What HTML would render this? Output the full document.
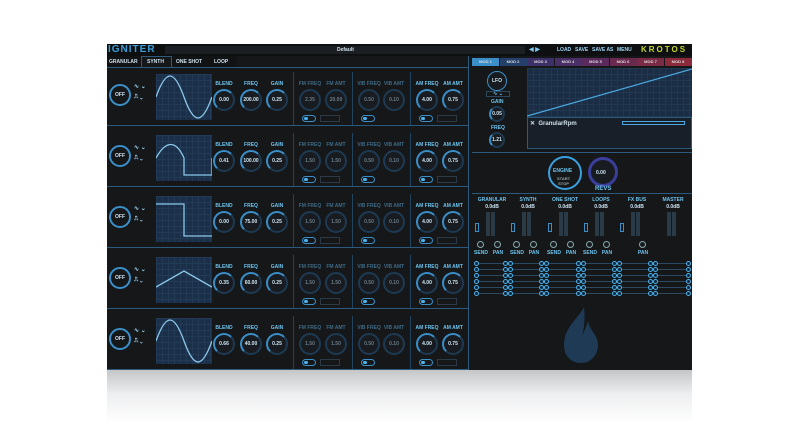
<!DOCTYPE html>
<html><head><meta charset="utf-8">
<style>
*{margin:0;padding:0;box-sizing:border-box}
body{width:800px;height:424px;background:#fff;position:relative;overflow:hidden;font-family:"Liberation Sans",sans-serif;font-weight:bold}
.a{position:absolute}
#win{left:107px;top:44px;width:585px;height:326px;background:#151719;}
#refl{left:107px;top:370px;width:585px;height:54px;background:linear-gradient(#c4c6c8,#eeeff0 45%,#fff)}
.t{position:absolute;color:#6cc3ee;font-size:5px;text-align:center;white-space:nowrap}
.d{color:#3e6a85}
.k{position:absolute;border-radius:50%;border:2px solid #1e3a52;background:#181c20}
.kv{position:absolute;width:100%;top:50%;margin-top:-3px;font-size:5px;color:#cfe6f5;text-align:center}
.hl{position:absolute;height:1px;background:#2b5a7e}
.vl{position:absolute;width:1px;background:#23445e}
</style></head><body>
<div id="refl" class="a"></div>
<div id="win" class="a"></div>
<!-- title bar -->
<div class="a" style="left:107px;top:44px;width:585px;height:12px;background:#0d0f11"></div>
<div class="a" style="left:108px;top:44px;font-size:10px;color:#3a9fd8;letter-spacing:1px;font-weight:bold">IGNITER</div>
<div class="a" style="left:165px;top:46px;width:360px;height:8px;background:#1b1e22"></div>
<div class="t" style="left:337px;top:47px;color:#cfe0ec">Default</div>
<div class="t" style="left:529px;top:46px;color:#7ec8f0;font-size:6px">◀ ▶</div>
<div class="t" style="left:557px;top:47px;color:#9fd6f5;font-size:5px">LOAD</div>
<div class="t" style="left:575px;top:47px;color:#9fd6f5;font-size:5px">SAVE</div>
<div class="t" style="left:592px;top:47px;color:#9fd6f5;font-size:5px">SAVE AS</div>
<div class="t" style="left:617px;top:47px;color:#9fd6f5;font-size:5px">MENU</div>
<div class="a" style="left:641px;top:45px;font-size:8px;color:#c5d82e;letter-spacing:2px">KROTOS</div>
<!-- tabs -->
<div class="a" style="left:107px;top:56px;width:130px;height:11px;background:#111315"></div>
<div class="a" style="left:141px;top:56px;width:31px;height:12px;background:#151719;border:1px solid #2b5a7e;border-bottom:none"></div>
<div class="t" style="left:109px;top:59px;color:#cfe0ec;font-size:5px">GRANULAR</div>
<div class="t" style="left:147px;top:59px;color:#cfe0ec;font-size:5px">SYNTH</div>
<div class="t" style="left:176px;top:59px;color:#cfe0ec;font-size:5px">ONE SHOT</div>
<div class="t" style="left:214px;top:59px;color:#cfe0ec;font-size:5px">LOOP</div>
<div class="hl" style="left:107px;top:67px;width:361px"></div>
<div class="vl" style="left:468px;top:56px;height:314px;background:#2b5a7e"></div>
<div id="rows"></div>
<div id="mods"></div>
<!-- LFO area -->
<div class="k" style="left:487px;top:71px;width:20px;height:20px;border-color:#3a8fc9;border-width:1px"><div class="kv">LFO</div></div>
<div class="a" style="left:486px;top:91px;width:24px;height:6px;border:1px solid #2b4a62;color:#7ec8f0;font-size:5px;text-align:center;line-height:4px">∿ ⌄</div>
<div class="t" style="left:491px;top:99px">GAIN</div>
<div class="k" style="left:489px;top:106px;width:16px;height:16px;border-left-color:#3a8fc9"><div class="kv">0.05</div></div>
<div class="t" style="left:491px;top:125px">FREQ</div>
<div class="k" style="left:489px;top:132px;width:16px;height:16px;border-left-color:#3a8fc9"><div class="kv">1.21</div></div>
<div class="a" style="left:527px;top:68px;width:165px;height:81px;border:1px solid #2b5a7e;background:#181f28"></div>
<div class="a" style="left:527px;top:68px;width:165px;height:49px;background:#1a2d44;background-image:linear-gradient(#213851 1px,transparent 1px),linear-gradient(90deg,#213851 1px,transparent 1px);background-size:6px 6px"></div>
<svg class="a" style="left:527px;top:68px" width="165" height="49"><line x1="0" y1="48" x2="165" y2="1" stroke="#4aa8e0" stroke-width="1.2"/></svg>
<div class="hl" style="left:527px;top:117px;width:165px"></div>
<div class="t" style="left:530px;top:120px;color:#cfe0ec;font-size:6px">✕ &nbsp;GranularRpm</div>
<div class="a" style="left:622px;top:121px;width:63px;height:4px;border:1px solid #4aa8e0"></div>
<div class="hl" style="left:472px;top:152px;width:220px"></div>
<!-- engine -->
<div class="a" style="left:548px;top:156px;width:34px;height:34px;border-radius:50%;border:2px solid #3aa0e0"></div>
<div class="t" style="left:553px;top:168px;font-size:5px">ENGINE</div>
<div class="t" style="left:557px;top:176px;color:#9aa;font-size:4px">START<br>STOP</div>
<div class="a" style="left:588px;top:157px;width:30px;height:30px;border-radius:50%;border:3px solid #3b3e9a;background:#181c20"></div>
<div class="t" style="left:596px;top:170px;color:#cfe6f5">0.00</div>
<div class="t" style="left:595px;top:186px;font-size:6px">REVS</div>
<div class="hl" style="left:472px;top:193px;width:220px"></div>
<div id="mix"></div>
<!-- flame -->
<svg class="a" style="left:560px;top:305px" width="42" height="60"><path d="M24 2 C18 14 4 22 4 40 C4 52 12 58 21 58 C31 58 38 50 38 40 C38 30 30 26 28 16 C26 24 22 28 22 36 C22 30 26 18 24 2Z" fill="#1e3a55"/></svg>
<script>
var R=document.getElementById('rows'),h='';
var vals=[['0.00','200.00','0.25','2.35','20.00'],['0.41','100.00','0.25','1.50','1.50'],['0.00','75.00','0.25','1.50','1.50'],['0.35','60.00','0.25','1.50','1.50'],['0.66','40.00','0.25','1.50','1.50']];
var waves=['M0 23 C10 -5 18 -5 28 23 S46 51 56 23','M0 23 C10 5 20 5 28 23 L28 40 L56 40 L56 23','M0 8 L28 8 L28 40 L56 40','M0 30 L28 14 L56 30','M0 23 C10 -5 18 -5 28 23 S46 51 56 23'];
for(var i=0;i<5;i++){var y=68+i*61,v=vals[i];
h+='<div class="a" style="left:109px;top:'+(y+16)+'px;width:22px;height:22px;border-radius:50%;border:2px solid #3a8fc9"><div class="kv" style="color:#cfe6f5">OFF</div></div>';
h+='<div class="t" style="left:134px;top:'+(y+15)+'px;font-size:6px;color:#9fd6f5">∿ ⌄</div><div class="t" style="left:134px;top:'+(y+26)+'px;font-size:6px;color:#9fd6f5">⎍ ⌄</div>';
h+='<div class="a" style="left:156px;top:'+(y+6)+'px;width:56px;height:46px;background:#1b3048;background-image:linear-gradient(#223a55 1px,transparent 1px),linear-gradient(90deg,#223a55 1px,transparent 1px);background-size:6px 6px"></div>';
h+='<svg class="a" style="left:156px;top:'+(y+6)+'px" width="56" height="46"><path d="'+waves[i]+'" stroke="#8cc8ea" stroke-width="1.3" fill="none"/></svg>';
var L=[['BLEND',224,v[0],1],['FREQ',251,v[1],1],['GAIN',277,v[2],1],['FM FREQ',310,v[3],0],['FM AMT',336,v[4],0],['VIB FREQ',369,'0.50',0],['VIB AMT',394,'0.10',0],['AM FREQ',427,'4.00',1],['AM AMT',453,'0.75',1]];
for(var j=0;j<9;j++){var l=L[j];
h+='<div class="t '+(l[3]?'':'d')+'" style="left:'+(l[1]-15)+'px;width:30px;top:'+(y+13)+'px">'+l[0]+'</div>';
h+='<div class="k" style="left:'+(l[1]-11)+'px;top:'+(y+21)+'px;width:22px;height:22px;'+(l[3]?'border-left-color:#3a8fc9;border-top-color:#3a8fc9':'')+'"><div class="kv" style="'+(l[3]?'':'color:#6a7a86')+'">'+l[2]+'</div></div>';}
[293,352,410].forEach(function(x){h+='<div class="vl" style="left:'+x+'px;top:'+(y+4)+'px;height:54px"></div>'});
[302,361,419].forEach(function(x){h+='<div class="a" style="left:'+x+'px;top:'+(y+47)+'px;width:14px;height:7px;border-radius:4px;border:1px solid #3a8fc9"><div class="a" style="left:1px;top:1px;width:4px;height:3px;border-radius:2px;background:#4ab4f0"></div></div>'});
[320,437].forEach(function(x){h+='<div class="a" style="left:'+x+'px;top:'+(y+47)+'px;width:20px;height:7px;border:1px solid #2b3a46"></div>'});
h+='<div class="hl" style="left:107px;top:'+(y+57)+'px;width:361px"></div>';}
R.innerHTML=h;
var M='',cols=['#3a8fc9','#24406a','#3d3068','#4a2f66','#5a2a5c','#6a2a4e','#7a2a44','#8a2a3a'];
for(var m=0;m<8;m++){M+='<div class="a" style="left:'+(472+m*27.5)+'px;top:58px;width:27px;height:8px;background:'+cols[m]+';color:#ddd;font-size:4px;text-align:center;line-height:8px">MOD '+(m+1)+'</div>';}
var names=['GRANULAR','SYNTH','ONE SHOT','LOOPS','FX BUS','MASTER'],xs=[492,528,565,601,637,673];
for(var c=0;c<6;c++){var x=xs[c];
M+='<div class="t" style="left:'+(x-20)+'px;width:40px;top:197px">'+names[c]+'</div><div class="t" style="left:'+(x-20)+'px;width:40px;top:204px;color:#cfe6f5">0.0dB</div>';
M+='<div class="a" style="left:'+(x-6)+'px;top:212px;width:4px;height:24px;background:#2a3a46"></div><div class="a" style="left:'+(x-1)+'px;top:212px;width:4px;height:24px;background:#2a3a46"></div>';
if(c<5)M+='<div class="a" style="left:'+(x-17)+'px;top:223px;width:4px;height:9px;border:1px solid #3a8fc9"></div>';
if(c<4)M+='<div class="k" style="left:'+(x-15)+'px;top:241px;width:7px;height:7px;border-width:1px;border-color:#8aa"></div><div class="t" style="left:'+(x-18)+'px;top:250px;width:14px">SEND</div>';
if(c<5)M+='<div class="k" style="left:'+(x+2)+'px;top:241px;width:7px;height:7px;border-width:1px;border-color:#8aa"></div><div class="t" style="left:'+(x-1)+'px;top:250px;width:14px">PAN</div>';}
for(var r=0;r<6;r++){var yy=261+r*6;M+='<div class="a" style="left:474px;top:'+(yy+2)+'px;width:216px;height:1px;background:#2b4a62"></div>';
[474,503,539,576,612,648,686].forEach(function(x,ix){var n=(ix==0||ix==6)?1:2;for(var q=0;q<n;q++)M+='<div class="a" style="left:'+(x+q*5)+'px;top:'+yy+'px;width:5px;height:5px;border-radius:50%;border:1px solid #4ab4f0;background:#123"></div>';});}
document.getElementById('mods').innerHTML=M;
</script>
</body></html>
